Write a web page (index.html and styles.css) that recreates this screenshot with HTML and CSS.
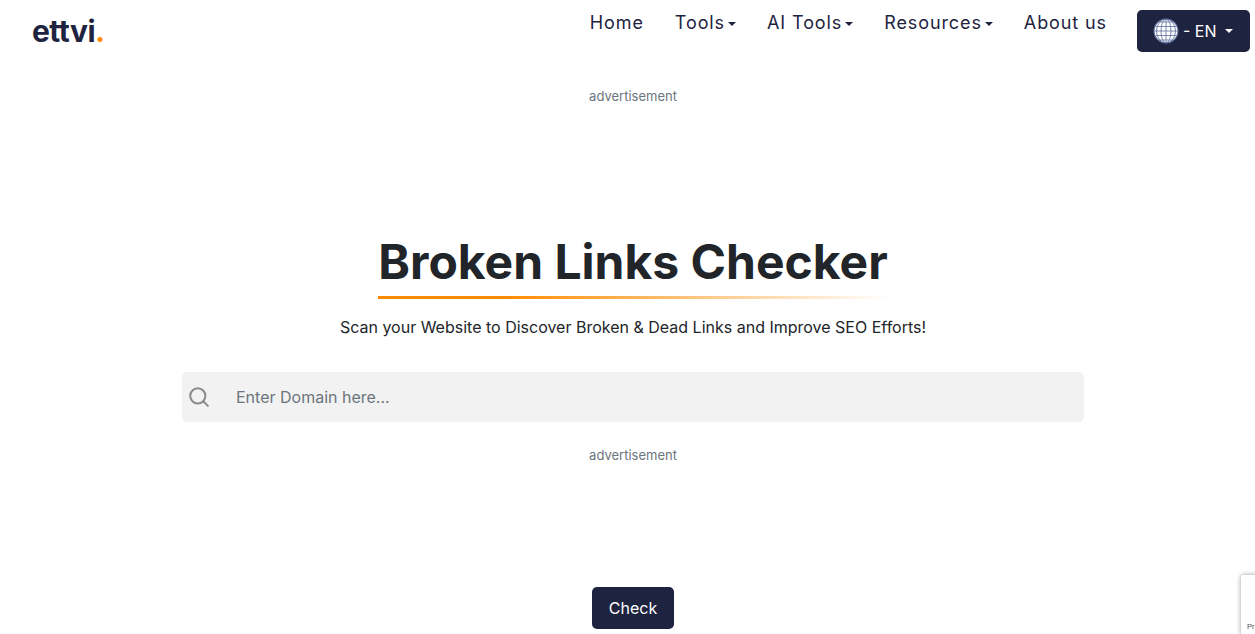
FILE: index.html
```html
<!doctype html>
<html lang="en">
<head>
	<title>Broken Links Checker</title>
	<meta charset="utf-8" />
	<link rel="stylesheet" href="styles.css">
</head>
<body>
	<header class="topbar">
		<a class="logo" href="#">ettvi<span class="logo-dot">.</span></a>
		<nav class="nav">
			<a href="#">Home</a>
			<a href="#" class="caret">Tools</a>
			<a href="#" class="caret">AI Tools</a>
			<a href="#" class="caret">Resources</a>
			<a href="#">About us</a>
		</nav>
		<button class="lang caret">
			<svg class="globe" width="26" height="26" viewBox="0 0 26 26" fill="none" stroke="#5a6c9a" stroke-width="0.8">
				<circle cx="13" cy="13" r="12" fill="#fff" stroke-width="1.1"/>
				<ellipse cx="13" cy="13" rx="5" ry="12"/>
				<ellipse cx="13" cy="13" rx="9.5" ry="12"/>
				<path d="M13 1v24M1 13h24M2.6 8.5h20.8M2.6 17.5h20.8M6 4h14M6 22h14"/>
			</svg>
			<span>- EN</span>
		</button>
	</header>

	<main class="main">
		<p class="ad ad-top">advertisement</p>
		<h1 class="title">Broken Links Checker</h1>
		<p class="sub">Scan your Website to Discover Broken &amp; Dead Links and Improve SEO Efforts!</p>
		<div class="search">
			<svg width="22" height="22" viewBox="0 0 22 22" fill="none" stroke="#8a8a8a" stroke-width="2" stroke-linecap="round">
				<circle cx="9.8" cy="9.8" r="7.6"/>
				<path d="M15.5 15.5l4.4 4.4"/>
			</svg>
			<input type="text" placeholder="Enter Domain here...">
		</div>
		<p class="ad ad-bottom">advertisement</p>
		<button class="check">Check</button>
	</main>

	<div class="recaptcha">Privacy</div>
</body>
</html>
```

FILE: styles.css
```css
html, body {
	height: 100%;
}

body {
	margin: 0;
	overflow: hidden;
	background: #fff;
	color: #212529;
	font-family: Inter, "Liberation Sans", sans-serif;
}

a {
	text-decoration: none;
}

.topbar {
	display: flex;
	align-items: flex-start;
	height: 72px;
	padding: 0 5px 0 32px;
}

.logo {
	margin-top: 11px;
	color: #1e2340;
	font-family: Inter, sans-serif;
	font-size: 30px;
	font-weight: 700;
	line-height: 40px;
	letter-spacing: -0.5px;
}

.logo-dot {
	color: #ff8c00;
}

.nav {
	display: flex;
	gap: 31px;
	margin-left: auto;
	margin-right: 30px;
	padding-top: 12px;
}

.nav a {
	color: #1e2340;
	font-size: 18px;
	line-height: 22px;
	letter-spacing: 0.9px;
}

.caret::after {
	content: "";
	display: inline-block;
	margin-left: 3px;
	vertical-align: 3px;
	border-top: 4px solid currentColor;
	border-left: 4px solid transparent;
	border-right: 4px solid transparent;
}

.lang {
	display: flex;
	align-items: center;
	width: 113px;
	height: 42px;
	margin-top: 10px;
	padding: 0 0 0 16px;
	border: 0;
	border-radius: 5px;
	background: #1e2340;
	color: #fff;
	font-family: inherit;
	font-size: 16px;
}

.lang span {
	margin-left: 4px;
}

.lang.caret::after {
	margin-left: 8px;
	vertical-align: 0;
}

.main {
	display: flex;
	flex-direction: column;
	align-items: center;
	padding-left: 11px;
}

.ad {
	margin: 0;
	color: #6c757d;
	font-size: 13px;
	line-height: 16px;
}

.ad-top {
	margin-top: 16px;
}

.title {
	margin: 129px 0 0;
	padding-bottom: 5px;
	font-size: 48px;
	font-weight: 700;
	line-height: 58px;
	border-bottom: 3px solid;
	border-image: linear-gradient(to right, #ff8c00, #ff8c00 25%, #fff) 1;
}

.sub {
	margin: 16px 0 0;
	font-size: 16px;
	line-height: 24px;
}

.search {
	display: flex;
	align-items: center;
	gap: 26px;
	box-sizing: border-box;
	width: 902px;
	height: 50px;
	margin-top: 33px;
	padding-left: 6px;
	border-radius: 5px;
	background: #f2f2f2;
}

.search input {
	flex: 1;
	padding: 0;
	border: 0;
	outline: 0;
	background: transparent;
	color: #212529;
	font-family: inherit;
	font-size: 16px;
}

.search input::placeholder {
	color: #6c757d;
	opacity: 1;
}

.ad-bottom {
	margin-top: 25px;
}

.check {
	width: 82px;
	height: 42px;
	margin-top: 124px;
	border: 0;
	border-radius: 5px;
	background: #1e2340;
	color: #fff;
	font-family: inherit;
	font-size: 16px;
}

.recaptcha {
	position: fixed;
	left: 1241px;
	top: 575px;
	width: 256px;
	height: 60px;
	padding: 47px 0 0 6px;
	box-sizing: border-box;
	background: #fff;
	box-shadow: 0 0 5px rgba(0, 0, 0, 0.4);
	border-radius: 2px;
	color: #555;
	font-family: Roboto, sans-serif;
	font-size: 8px;
}
```
